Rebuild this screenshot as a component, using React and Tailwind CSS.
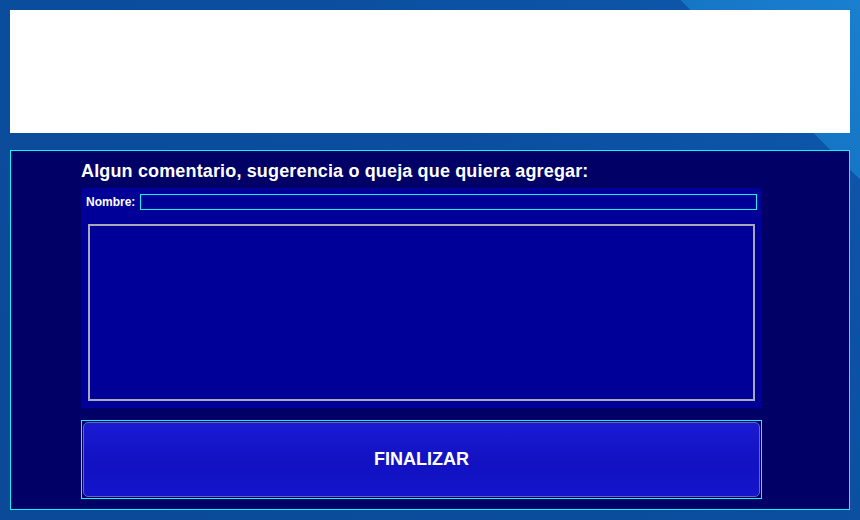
export default function App() {
  return (
    <div
      className="w-[860px] h-[520px] p-[10px] flex flex-col bg-[linear-gradient(225deg,#1a7fcf_0%,#1676c6_13%,#0d55a8_13%,#0b4d9e_45%,#0a4a98_100%)]"
      style={{ fontFamily: '"Liberation Sans", Arial, sans-serif' }}
    >
      {/* ── White banner ── */}
      <div className="h-[123px] bg-white shrink-0" />

      {/* ── Comment panel ── */}
      <div className="mt-[17px] h-[360px] border border-[#11f4ff] bg-[#000066] pl-[70px] pt-[10px]">
        <h2 className="text-[18px] leading-[20px] font-bold text-white tracking-[0.15px]">
          Algun comentario, sugerencia o queja que quiera agregar:
        </h2>

        <div className="mt-[7px] w-[681px] h-[220px] bg-[#000099] pt-[6px] flex flex-col">
          <div className="flex items-center pl-[5px] pr-[5px]">
            <label className="text-[12px] leading-[16px] font-bold text-white w-[54px] shrink-0">
              Nombre:
            </label>
            <input
              type="text"
              className="flex-1 h-[16px] border border-[#11f4ff] bg-[#000099] text-white text-xs outline-none"
            />
          </div>
          <textarea className="mx-[7px] mt-[14px] h-[177px] border-2 border-[#a8a8b8] bg-[#000099] text-white resize-none outline-none" />
        </div>

        <div className="mt-[12px] w-[681px] h-[79px] border border-[#11f4ff] p-px">
          <button
            className="w-full h-full rounded-[5px] border border-[#6868a8] text-white text-[18px] font-bold bg-[linear-gradient(180deg,#1a1ad2_0%,#1212c2_55%,#1414cc_100%)]"
          >
            FINALIZAR
          </button>
        </div>
      </div>
    </div>
  )
}
